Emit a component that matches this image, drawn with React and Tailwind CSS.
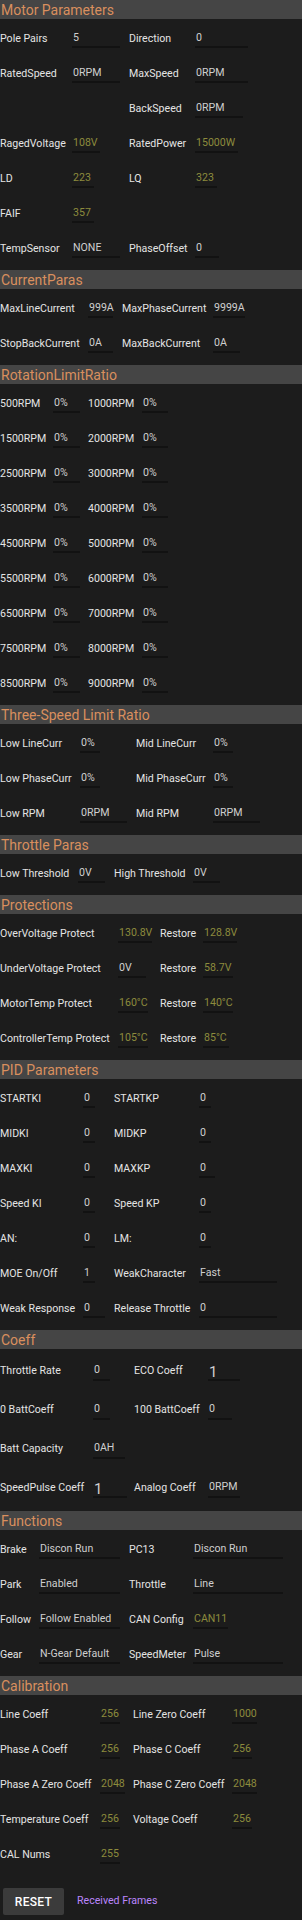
import React from 'react';

const OLIVE = 'text-[#8c8b3d]';
const PLAIN = 'text-[#cfcfcf]';

// one label + underlined value
const Pair = ({ w, lw, item, lift }) => {
    if (!item) return <div className={`shrink-0 ${w || ''}`} />;
    const [label, value, vw, tone, big] = item;
    return (
        <div className={`flex shrink-0 items-center ${w || ''}`}>
            <span className={`shrink-0 whitespace-nowrap text-[#e4e4e4] ${lw}`}>{label}</span>
            {value !== undefined && (
                <span
                    className={`flex shrink-0 whitespace-nowrap border-b-2 border-[#121212] pl-[1px] ${vw} ${tone === 'o' ? OLIVE : PLAIN} ${
                        lift ? 'h-[18px] items-start' : 'h-[16px] items-center'
                    } ${big ? 'text-[15px] leading-[18px]' : lift ? 'leading-[14px]' : ''}`}
                >
                    {value}
                </span>
            )}
        </div>
    );
};

const Section = ({ title, cfg, rows, rowH = 'h-[35px]', lift }) => (
    <div>
        <div className="flex h-[19px] items-center bg-[#454545] pl-[1px] text-[14px] leading-none text-[#d98f5e]">{title}</div>
        <div className="py-[3px]">
            {rows.map((r, i) => (
                <div key={i} className={`flex items-center ${rowH}`}>
                    <Pair w={cfg.w1} lw={cfg.lw1} item={r[0]} lift={lift} />
                    <Pair lw={cfg.lw2} item={r[1]} lift={lift} />
                </div>
            ))}
        </div>
    </div>
);

const motor = [
    [['Pole Pairs', '5', 'w-[48px]'], ['Direction', '0', 'w-[53px]']],
    [['RatedSpeed', '0RPM', 'w-[48px]'], ['MaxSpeed', '0RPM', 'w-[53px]']],
    [null, ['BackSpeed', '0RPM', 'w-[48px]']],
    [['RagedVoltage', '108V', 'w-[28px]', 'o'], ['RatedPower', '15000W', 'w-[43px]', 'o']],
    [['LD', '223', 'w-[22px]', 'o'], ['LQ', '323', 'w-[22px]', 'o']],
    [['FAIF', '357', 'w-[22px]', 'o'], null],
    [['TempSensor', 'NONE', 'w-[48px]'], ['PhaseOffset', '0', 'w-[24px]']],
];

const current = [
    [['MaxLineCurrent', '999A', 'w-[25px]'], ['MaxPhaseCurrent', '9999A', 'w-[32px]']],
    [['StopBackCurrent', '0A', 'w-[25px]'], ['MaxBackCurrent', '0A', 'w-[27px]']],
];

const rpm = [500, 1500, 2500, 3500, 4500, 5500, 6500, 7500, 8500].map((n) => [
    [`${n}RPM`, '0%', 'w-[27px]'],
    [`${n + 500}RPM`, '0%', 'w-[26px]'],
]);

const threeSpeed = [
    [['Low LineCurr', '0%', 'w-[20px]'], ['Mid LineCurr', '0%', 'w-[20px]']],
    [['Low PhaseCurr', '0%', 'w-[20px]'], ['Mid PhaseCurr', '0%', 'w-[20px]']],
    [['Low RPM', '0RPM', 'w-[47px]'], ['Mid RPM', '0RPM', 'w-[47px]']],
];

const throttle = [[['Low Threshold', '0V', 'w-[27px]'], ['High Threshold', '0V', 'w-[27px]']]];

const protections = [
    [['OverVoltage Protect', '130.8V', 'w-[34px]', 'o'], ['Restore', '128.8V', 'w-[34px]', 'o']],
    [['UnderVoltage Protect', '0V', 'w-[28px]'], ['Restore', '58.7V', 'w-[30px]', 'o']],
    [['MotorTemp Protect', '160°C', 'w-[30px]', 'o'], ['Restore', '140°C', 'w-[30px]', 'o']],
    [['ControllerTemp Protect', '105°C', 'w-[30px]', 'o'], ['Restore', '85°C', 'w-[26px]', 'o']],
];

const pid = [
    [['STARTKI', '0', 'w-[12px]'], ['STARTKP', '0', 'w-[12px]']],
    [['MIDKI', '0', 'w-[12px]'], ['MIDKP', '0', 'w-[12px]']],
    [['MAXKI', '0', 'w-[12px]'], ['MAXKP', '0', 'w-[16px]']],
    [['Speed KI', '0', 'w-[12px]'], ['Speed KP', '0', 'w-[12px]']],
    [['AN:', '0', 'w-[12px]'], ['LM:', '0', 'w-[12px]']],
    [['MOE On/Off', '1', 'w-[12px]'], ['WeakCharacter', 'Fast', 'w-[78px]']],
    [['Weak Response', '0', 'w-[22px]'], ['Release Throttle', '0', 'w-[78px]']],
];

const coeff = [
    [['Throttle Rate', '0', 'w-[17px]'], ['ECO Coeff', '1', 'w-[32px]', '', true]],
    [['0 BattCoeff', '0', 'w-[17px]'], ['100 BattCoeff', '0', 'w-[24px]']],
    [['Batt Capacity', '0AH', 'w-[32px]'], null],
    [['SpeedPulse Coeff', '1', 'w-[34px]', '', true], ['Analog Coeff', '0RPM', 'w-[32px]']],
];

const functions = [
    [['Brake', 'Discon Run', 'w-[81px]'], ['PC13', 'Discon Run', 'w-[90px]']],
    [['Park', 'Enabled', 'w-[81px]'], ['Throttle', 'Line', 'w-[90px]']],
    [['Follow', 'Follow Enabled', 'w-[81px]'], ['CAN Config', 'CAN11', 'w-[35px]', 'o']],
    [['Gear', 'N-Gear Default', 'w-[81px]'], ['SpeedMeter', 'Pulse', 'w-[90px]']],
];

const calibration = [
    [['Line Coeff', '256', 'w-[20px]', 'o'], ['Line Zero Coeff', '1000', 'w-[25px]', 'o']],
    [['Phase A Coeff', '256', 'w-[20px]', 'o'], ['Phase C Coeff', '256', 'w-[20px]', 'o']],
    [['Phase A Zero Coeff', '2048', 'w-[25px]', 'o'], ['Phase C Zero Coeff', '2048', 'w-[25px]', 'o']],
    [['Temperature Coeff', '256', 'w-[20px]', 'o'], ['Voltage Coeff', '256', 'w-[20px]', 'o']],
    [['CAL Nums', '255', 'w-[20px]', 'o'], null],
];

export default function App() {
    return (
        <div className="min-h-screen w-full bg-[#1c1c1c] font-['Roboto',sans-serif] text-[10.6px] leading-none">
            <Section title="Motor Parameters" cfg={{ w1: 'w-[129px]', lw1: 'w-[72px]', lw2: 'w-[66px]' }} rows={motor} />
            <Section title="CurrentParas" cfg={{ w1: 'w-[122px]', lw1: 'w-[88px]', lw2: 'w-[91px]' }} rows={current} />
            <Section title="RotationLimitRatio" cfg={{ w1: 'w-[88px]', lw1: 'w-[53px]', lw2: 'w-[54px]' }} rows={rpm} />
            <Section title="Three-Speed Limit Ratio" cfg={{ w1: 'w-[136px]', lw1: 'w-[80px]', lw2: 'w-[77px]' }} rows={threeSpeed} />
            <Section title="Throttle Paras" cfg={{ w1: 'w-[114px]', lw1: 'w-[78px]', lw2: 'w-[79px]' }} rows={throttle} />
            <Section title="Protections" cfg={{ w1: 'w-[160px]', lw1: 'w-[118px]', lw2: 'w-[43px]' }} rows={protections} />
            <Section title="PID Parameters" cfg={{ w1: 'w-[114px]', lw1: 'w-[83px]', lw2: 'w-[85px]' }} rows={pid} />
            <Section title="Coeff" cfg={{ w1: 'w-[134px]', lw1: 'w-[93px]', lw2: 'w-[74px]' }} rows={coeff} rowH="h-[39px]" lift />
            <Section title="Functions" cfg={{ w1: 'w-[129px]', lw1: 'w-[39px]', lw2: 'w-[64px]' }} rows={functions} />
            <Section title="Calibration" cfg={{ w1: 'w-[133px]', lw1: 'w-[100px]', lw2: 'w-[99px]' }} rows={calibration} />

            {/* bottom actions */}
            <div className="mt-[12px] flex items-center gap-[13px] pl-[3px]">
                <button className="flex h-[27px] w-[61px] items-center justify-center rounded-[2px] bg-[#3b3b3b] text-[12px] font-medium tracking-[0.3px] text-white">
                    RESET
                </button>
                <span className="text-[10.6px] text-[#bb86fc]">Received Frames</span>
            </div>
        </div>
    );
}
